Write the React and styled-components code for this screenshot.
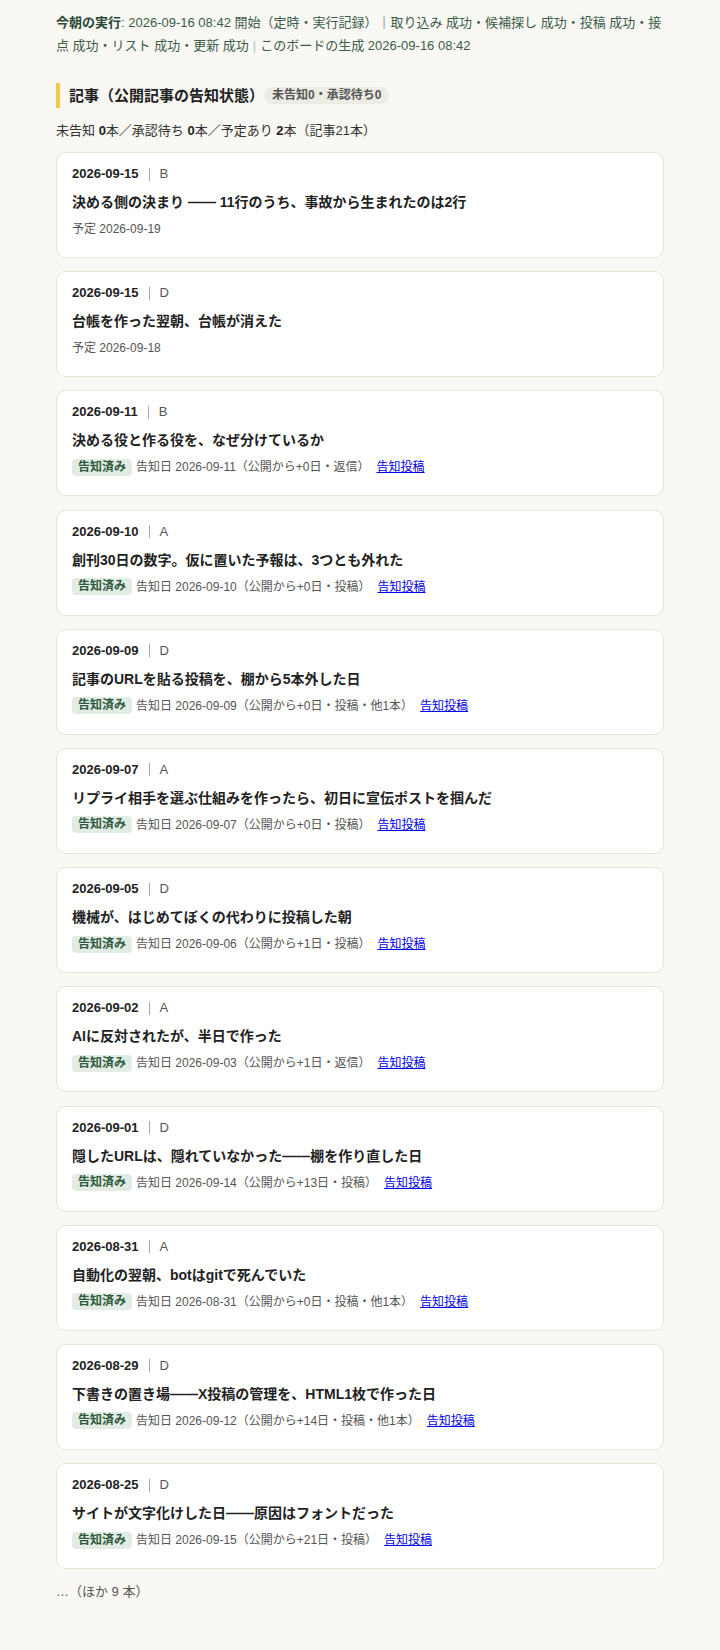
import React from 'react'
import styled, { createGlobalStyle } from 'styled-components'

const GlobalStyle = createGlobalStyle`
  html, body {
    margin: 0;
    padding: 0;
    background: #f9f8f4;
  }
  body {
    font-family: "Liberation Sans", "Noto Sans CJK JP", sans-serif;
    color: #2b2b2b;
    -webkit-font-smoothing: antialiased;
  }
`

const articles = [
  { date: '2026-09-15', cat: 'B', title: '決める側の決まり —— 11行のうち、事故から生まれたのは2行', plan: '2026-09-19' },
  { date: '2026-09-15', cat: 'D', title: '台帳を作った翌朝、台帳が消えた', plan: '2026-09-18' },
  { date: '2026-09-11', cat: 'B', title: '決める役と作る役を、なぜ分けているか', notice: '告知日 2026-09-11（公開から+0日・返信）' },
  { date: '2026-09-10', cat: 'A', title: '創刊30日の数字。仮に置いた予報は、3つとも外れた', notice: '告知日 2026-09-10（公開から+0日・投稿）' },
  { date: '2026-09-09', cat: 'D', title: '記事のURLを貼る投稿を、棚から5本外した日', notice: '告知日 2026-09-09（公開から+0日・投稿・他1本）' },
  { date: '2026-09-07', cat: 'A', title: 'リプライ相手を選ぶ仕組みを作ったら、初日に宣伝ポストを掴んだ', notice: '告知日 2026-09-07（公開から+0日・投稿）' },
  { date: '2026-09-05', cat: 'D', title: '機械が、はじめてぼくの代わりに投稿した朝', notice: '告知日 2026-09-06（公開から+1日・投稿）' },
  { date: '2026-09-02', cat: 'A', title: 'AIに反対されたが、半日で作った', notice: '告知日 2026-09-03（公開から+1日・返信）' },
  { date: '2026-09-01', cat: 'D', title: '隠したURLは、隠れていなかった——棚を作り直した日', notice: '告知日 2026-09-14（公開から+13日・投稿）' },
  { date: '2026-08-31', cat: 'A', title: '自動化の翌朝、botはgitで死んでいた', notice: '告知日 2026-08-31（公開から+0日・投稿・他1本）' },
  { date: '2026-08-29', cat: 'D', title: '下書きの置き場——X投稿の管理を、HTML1枚で作った日', notice: '告知日 2026-09-12（公開から+14日・投稿・他1本）' },
  { date: '2026-08-25', cat: 'D', title: 'サイトが文字化けした日——原因はフォントだった', notice: '告知日 2026-09-15（公開から+21日・投稿）' },
]

const App = () => {
  return <Page>
    <GlobalStyle />
    <RunLog>
      <strong>今朝の実行</strong>: 2026-09-16 08:42 開始（定時・実行記録）｜取り込み 成功・候補探し 成功・投稿 成功・接点 成功・リスト 成功・更新 成功<Sep>|</Sep>このボードの生成 2026-09-16 08:42
    </RunLog>

    <SectionHead>
      <h2>記事（公開記事の告知状態）</h2>
      <Pill>未告知0・承認待ち0</Pill>
    </SectionHead>
    <Summary>
      未告知 <b>0</b>本／承認待ち <b>0</b>本／予定あり <b>2</b>本（記事21本）
    </Summary>

    <CardList>
      {articles.map((a, i) => (
        <Card key={i}>
          <MetaRow>
            <span className="date">{a.date}</span>
            <span className="sep" />
            <span className="cat">{a.cat}</span>
          </MetaRow>
          <Title>{a.title}</Title>
          <StatusRow>
            {a.plan && <span>予定 {a.plan}</span>}
            {a.notice && <>
              <Badge>告知済み</Badge>
              <span>{a.notice}</span>
              <a href="#" onClick={e => e.preventDefault()}>告知投稿</a>
            </>}
          </StatusRow>
        </Card>
      ))}
    </CardList>

    <More>…（ほか 9 本）</More>
  </Page>
}

const Page = styled.div`
  max-width: 608px;
  margin: 0 auto;
  padding: 11px 0 40px;
`

const RunLog = styled.div`
  font-size: 13px;
  line-height: 23px;
  color: #3b5c48;
  strong {
    color: #2b4837;
    font-weight: 700;
  }
`

const Sep = styled.span`
  color: #b3c0b6;
  margin: 0 4px;
`

const SectionHead = styled.div`
  display: flex;
  align-items: center;
  margin-top: 26px;
  padding-left: 9px;
  border-left: 4px solid #f2c744;
  height: 25px;

  h2 {
    margin: 0;
    font-size: 15px;
    font-weight: 700;
    color: #222;
    line-height: 25px;
  }
`

const Pill = styled.span`
  margin-left: 0;
  background: #ecebe4;
  color: #555;
  font-size: 12px;
  font-weight: 700;
  line-height: 17px;
  padding: 0 8px;
  border-radius: 9px;
`

const Summary = styled.div`
  margin-top: 13px;
  font-size: 13px;
  line-height: 20px;
  color: #333;
  b {
    font-weight: 700;
    color: #222;
  }
`

const CardList = styled.div`
  display: flex;
  flex-direction: column;
  gap: 13.2px;
  margin-top: 11px;
`

const Card = styled.div`
  background: #fff;
  border: 1px solid #e6e2d8;
  border-radius: 10px;
  padding: 11px 15px 18px;
`

const MetaRow = styled.div`
  display: flex;
  align-items: center;
  font-size: 13px;
  line-height: 20px;

  .date {
    font-weight: 700;
    color: #222;
  }
  .sep {
    width: 1px;
    height: 13px;
    background: #a8a8a8;
    margin: 0 10px;
  }
  .cat {
    color: #555;
  }
`

const Title = styled.div`
  margin-top: 7px;
  font-size: 14px;
  font-weight: 700;
  line-height: 22px;
  color: #222;
`

const StatusRow = styled.div`
  margin-top: 6px;
  display: flex;
  align-items: center;
  font-size: 12px;
  line-height: 20px;
  color: #555;

  a {
    margin-left: 7px;
    color: #0000ee;
    text-decoration: underline;
  }
`

const Badge = styled.span`
  background: #e2ece4;
  color: #2f5a3e;
  font-size: 12px;
  font-weight: 700;
  line-height: 17px;
  padding: 0 6px;
  border-radius: 4px;
  margin-right: 4px;
`

const More = styled.div`
  margin-top: 13px;
  font-size: 13px;
  line-height: 20px;
  color: #555;
`

export default App
